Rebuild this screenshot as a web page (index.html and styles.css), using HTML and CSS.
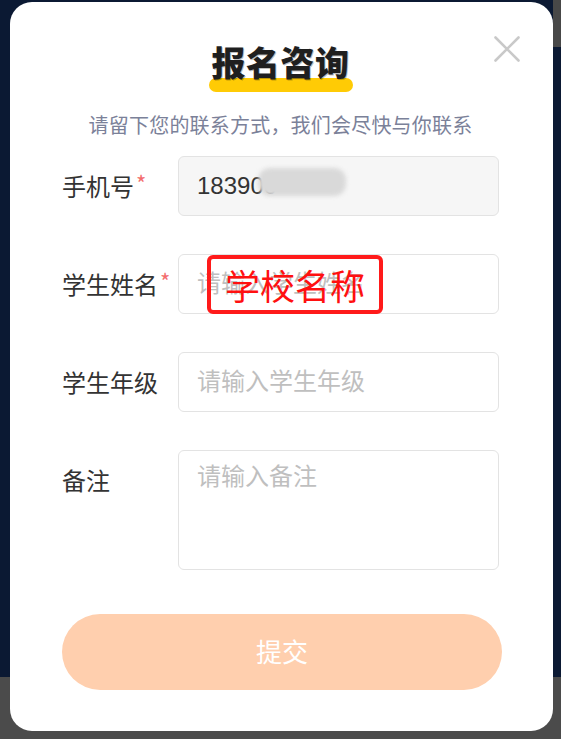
FILE: index.html
```html
<!DOCTYPE html>
<html lang="zh-CN">
<head>
<meta charset="utf-8">
<title>报名咨询</title>
<link rel="stylesheet" href="styles.css">
</head>
<body>
<div class="modal">
  <button class="close" type="button" aria-label="关闭">
    <svg width="26" height="26" viewBox="0 0 26 26"><path d="M1.5 1.5 L24.5 24.5 M24.5 1.5 L1.5 24.5" stroke="#c9c9c9" stroke-width="2.6" fill="none" stroke-linecap="round"/></svg>
  </button>
  <header class="head">
    <h2 class="title"><span class="title-text">报名咨询</span></h2>
    <p class="sub">请留下您的联系方式，我们会尽快与你联系</p>
  </header>
  <form class="form">
    <label class="lbl">手机号<i class="req">*</i></label>
    <div class="field">
      <input class="inp filled" type="text" value="183900" readonly>
      <span class="blur"></span>
    </div>

    <label class="lbl">学生姓名<i class="req">*</i></label>
    <div class="field">
      <input class="inp" type="text" placeholder="请输入学生姓名">
      <span class="note">学校名称</span>
    </div>

    <label class="lbl">学生年级</label>
    <div class="field">
      <input class="inp" type="text" placeholder="请输入学生年级">
    </div>

    <label class="lbl">备注</label>
    <div class="field">
      <textarea class="inp area" placeholder="请输入备注"></textarea>
    </div>
  </form>
  <button class="submit" type="button">提交</button>
</div>
</body>
</html>
```
FILE: styles.css
```css
* { box-sizing: border-box; }
html, body { margin: 0; padding: 0; }
body {
  width: 561px;
  height: 739px;
  overflow: hidden;
  font-family: "Noto Sans CJK SC", "Liberation Sans", sans-serif;
  background:
    linear-gradient(#484848, #484848) right top / 8px 47px no-repeat,
    linear-gradient(to bottom, #0b1933 0, #0b1933 677px, #4b4b4b 677px);
}
.modal {
  position: relative;
  margin: 2px 0 0 10px;
  width: 543px;
  height: 729px;
  background: #fff;
  border-radius: 22px;
  padding: 40px 54px 0 52px;
  display: flex;
  flex-direction: column;
}
.close {
  position: absolute;
  top: 34px;
  right: 33px;
  width: 26px;
  height: 26px;
  padding: 0;
  border: 0;
  background: none;
  display: flex;
}
.head {
  display: flex;
  flex-direction: column;
  align-items: center;
}
.title {
  margin: 0;
  font-size: 34px;
  line-height: 40px;
  font-weight: 900;
  color: #1f1f1f;
}
.title-text {
  position: relative;
  z-index: 0;
  display: inline-block;
  padding: 0 3px;
  letter-spacing: 0.5px;
  text-shadow: 1px 1px 0 rgba(0, 0, 0, 0.25);
}
.title-text::before {
  content: "";
  position: absolute;
  z-index: -1;
  left: 0;
  right: 0;
  bottom: -10px;
  height: 14px;
  border-radius: 7px;
  background: #ffcb05;
}
.sub {
  margin: 30px 0 0;
  font-size: 20px;
  line-height: 26px;
  color: #7b8199;
  letter-spacing: 0.2px;
}
.form {
  margin-top: 18px;
  display: grid;
  grid-template-columns: 116px 321px;
  row-gap: 38px;
}
.lbl {
  font-size: 24px;
  line-height: 60px;
  color: #333;
  white-space: nowrap;
  align-self: start;
}
.req {
  font-style: normal;
  color: #f36d6d;
  font-size: 22px;
  margin-left: 2px;
  position: relative;
  top: -4px;
}
.field {
  position: relative;
}
.inp {
  display: block;
  width: 321px;
  height: 60px;
  margin: 0;
  padding: 0 18px;
  border: 1px solid #e3e3e3;
  border-radius: 6px;
  background: #fff;
  font-family: "Liberation Sans", "Noto Sans CJK SC", sans-serif;
  font-size: 24px;
  color: #333;
  outline: none;
}
.inp::placeholder {
  color: #bfbfbf;
  font-family: "Noto Sans CJK SC", sans-serif;
}
.filled {
  background: #f6f6f6;
}
.area {
  height: 120px;
  padding-top: 9px;
  line-height: 30px;
  resize: none;
}
.blur {
  position: absolute;
  left: 80px;
  top: 12px;
  width: 88px;
  height: 28px;
  border-radius: 12px;
  background: #d9d9d9;
  filter: blur(2px);
}
.note {
  position: absolute;
  left: 29px;
  top: 1px;
  width: 176px;
  height: 59px;
  border: 4px solid #ff1a1a;
  border-radius: 6px;
  display: flex;
  align-items: center;
  justify-content: center;
  font-size: 35px;
  line-height: 1;
  color: #ff1010;
  padding-bottom: 0;
}
.submit {
  margin-top: 44px;
  margin-left: 0;
  width: 440px;
  height: 76px;
  border: 0;
  border-radius: 38px;
  background: #ffcfae;
  color: #fff;
  font-family: "Noto Sans CJK SC", sans-serif;
  font-size: 26px;
  padding: 0 0 4px;
}
```
